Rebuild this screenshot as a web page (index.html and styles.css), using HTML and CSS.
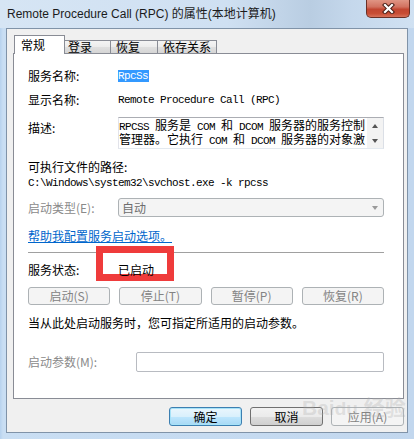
FILE: index.html
```html
<!DOCTYPE html>
<html>
<head>
<meta charset="utf-8">
<link rel="stylesheet" href="styles.css">
</head>
<body>
<div class="window">
  <div class="titlebar">
    <span class="title">Remote Procedure Call (RPC) 的属性(本地计算机)</span>
    <div class="close">
      <svg width="13" height="11" viewBox="0 0 13 11">
        <path d="M3 2 L10 9 M10 2 L3 9" stroke="#4a1e16" stroke-width="4.2" stroke-linecap="square" fill="none"/>
        <path d="M3 2 L10 9 M10 2 L3 9" stroke="#ffffff" stroke-width="2.2" stroke-linecap="square" fill="none"/>
      </svg>
    </div>
  </div>
  <div class="client">
    <div class="tabs">
      <div class="tab active">常规</div>
      <div class="tab t2">登录</div>
      <div class="tab t3">恢复</div>
      <div class="tab t4">依存关系</div>
    </div>
    <div class="panel">
      <div class="row r1"><span class="label">服务名称:</span><span class="mono sel">RpcSs</span></div>
      <div class="row r2"><span class="label">显示名称:</span><span class="mono">Remote Procedure Call (RPC)</span></div>
      <div class="row r3">
        <span class="label lab-top">描述:</span>
        <div class="textarea">
          <div class="ta-text"><div class="ta-line"><span class="mono">RPCSS </span>服务是<span class="mono"> COM </span>和<span class="mono"> DCOM </span>服务器的服务控制</div><div class="ta-line">管理器。它执行<span class="mono"> COM </span>和<span class="mono"> DCOM </span>服务器的对象激</div></div>
          <div class="scroll"><div class="arr"><span class="up"></span></div><div class="arr"><span class="down"></span></div></div>
        </div>
      </div>
      <div class="row r4"><span>可执行文件的路径:</span></div>
      <div class="row r5"><span class="mono">C:\Windows\system32\svchost.exe -k rpcss</span></div>
      <div class="row r6">
        <span class="label dis">启动类型(E):</span>
        <div class="select"><span>自动</span><span class="down sel-arr"></span></div>
      </div>
      <div class="row r7"><span class="link">帮助我配置服务启动选项。</span></div>
      <div class="sep"></div>
      <div class="row r8"><span class="label">服务状态:</span><span class="status">已启动</span></div>
      <div class="btns">
        <div class="dbtn">启动(S)</div>
        <div class="dbtn">停止(T)</div>
        <div class="dbtn">暂停(P)</div>
        <div class="dbtn">恢复(R)</div>
      </div>
      <div class="row r9"><span>当从此处启动服务时，您可指定所适用的启动参数。</span></div>
      <div class="row r10"><span class="label wide dis">启动参数(M):</span><div class="input"></div></div>
      <div class="redbox"></div>
    </div>
    <div class="actions">
      <div class="btn default">确定</div>
      <div class="btn">取消</div>
      <div class="btn disabled">应用(A)</div>
    </div>
  </div>
  <div class="wm">Bai<span class="wm2">du</span> 经验</div>
</div>
</body>
</html>
```
FILE: styles.css
```css
html, body {
  margin: 0;
  padding: 0;
}
body {
  width: 414px;
  height: 439px;
  overflow: hidden;
  background: #c4d9ef;
  font-family: "Noto Sans CJK SC", "Liberation Sans", sans-serif;
  font-size: 12px;
  color: #000;
}
.window {
  position: relative;
  height: 439px;
  box-sizing: border-box;
  padding: 0 6px 6px 6px;
  background: linear-gradient(to right, #b7d2ee 0, #c9def3 3px, #c6dbf1 50%, #c2d7ee 100%);
}
.titlebar {
  display: flex;
  align-items: flex-start;
  height: 28px;
  margin: 0 -6px;
  padding: 0 4px 0 7px;
  background: linear-gradient(to right, #d6e5f4 0%, #cfe0f2 55%, #b9cde2 75%, #c5d8ec 85%, #d0e1f2 100%);
}
.title {
  font-family: "Liberation Sans", "Noto Sans CJK SC", sans-serif;
  font-size: 12px;
  line-height: 28px;
  color: #1b1b1b;
}
.close {
  margin-left: auto;
  width: 44px;
  height: 18px;
  box-sizing: border-box;
  border: 1px solid #6a3026;
  border-top: none;
  border-radius: 0 0 5px 5px;
  background: linear-gradient(#e09584 0%, #d27260 40%, #c24631 55%, #c84e35 80%, #d8725a 100%);
  display: flex;
  align-items: center;
  justify-content: center;
}
.client {
  height: 405px;
  box-sizing: border-box;
  border: 1px solid #8093a8;
  background: #f0f0f0;
  padding: 6px 3px 0 6px;
}
.tabs {
  display: flex;
  align-items: flex-end;
  height: 18px;
  margin-left: 1px;
  position: relative;
  z-index: 2;
}
.tab {
  box-sizing: border-box;
  height: 13px;
  border: 1px solid #898c95;
  border-bottom: none;
  margin-left: -1px;
  background: linear-gradient(#f4f4f4 0%, #ececec 50%, #e0e0e0 51%, #d5d5d5 100%);
  line-height: 12px;
  padding-left: 5px;
  white-space: nowrap;
}
.tab.active {
  width: 51px;
  height: 19px;
  margin-left: 0;
  margin-bottom: -1px;
  background: #fff;
  padding-left: 6px;
  line-height: 17px;
  position: relative;
  z-index: 3;
}
.t2 { width: 47px; padding-left: 3px; }
.t3 { width: 48px; }
.t4 { width: 60px; }
.panel {
  position: relative;
  height: 346px;
  box-sizing: border-box;
  border: 1px solid #898c95;
  background: #fff;
  padding: 14px 19px 0 14px;
}
.row {
  display: flex;
  align-items: center;
  line-height: 16px;
  white-space: nowrap;
}
.label {
  width: 90px;
  flex: none;
}
.label.wide { width: 108px; }
.dis { color: #8a8a8a; }
.mono {
  font-family: "Liberation Mono", monospace;
  font-size: 11px;
  letter-spacing: -0.6px;
}
.sel {
  background: #3399ff;
  color: #fff;
  line-height: 12px;
  padding-right: 1px;
}
.r1 { height: 16px; }
.r2 { margin-top: 8px; }
.r3 { margin-top: 9px; align-items: flex-start; }
.lab-top { padding-top: 3px; }
.textarea {
  width: 266px;
  height: 32px;
  box-sizing: border-box;
  border: 1px solid;
  border-color: #abadb3 #dbdfe6 #e3e9ef #e2e3ea;
  display: flex;
  background: #fff;
}
.ta-text {
  flex: 1;
  white-space: nowrap;
  padding-top: 0;
}
.ta-line {
  height: 14px;
  line-height: 14px;
}
.scroll {
  width: 16px;
  flex: none;
  background: #f3f3f3;
  display: flex;
  flex-direction: column;
}
.arr {
  height: 15px;
  display: flex;
  align-items: center;
  justify-content: center;
}
.up, .down {
  width: 0;
  height: 0;
  border-left: 3.5px solid transparent;
  border-right: 3.5px solid transparent;
}
.up { border-bottom: 4px solid #555; }
.down { border-top: 4px solid #555; }
.r4 { margin-top: 10px; }
.r6 { margin-top: 7px; }
.select {
  width: 266px;
  height: 19px;
  box-sizing: border-box;
  border: 1px solid #adb2b5;
  border-radius: 3px;
  background: #f4f4f4;
  color: #6d6d6d;
  display: flex;
  align-items: center;
  padding-left: 3px;
}
.sel-arr {
  margin-left: auto;
  margin-right: 5px;
  border-top-color: #9a9a9a;
}
.r7 { margin-top: 11px; }
.link {
  color: #0066cc;
  text-decoration: underline;
}
.sep {
  margin-top: 8px;
  height: 1px;
  background: #a0a0a0;
}
.r8 { margin-top: 9px; }
.status {
  position: relative;
  z-index: 2;
}
.btns {
  margin-top: 9px;
  display: grid;
  grid-template-columns: repeat(4, 1fr);
  gap: 9px;
}
.dbtn {
  height: 18px;
  box-sizing: border-box;
  border: 1px solid #adb2b5;
  border-radius: 3px;
  background: #f4f4f4;
  color: #838383;
  text-align: center;
  line-height: 16px;
}
.r9 { margin-top: 10px; }
.r10 { margin-top: 21px; }
.input {
  width: 248px;
  height: 20px;
  box-sizing: border-box;
  border: 1px solid #b8bbc1;
  border-radius: 2px;
  background: #fff;
}
.redbox {
  position: absolute;
  left: 82px;
  top: 192px;
  width: 78px;
  height: 35px;
  box-sizing: border-box;
  border: 7px solid #ef3b3b;
  background: #fff;
  z-index: 1;
}
.actions {
  display: flex;
  justify-content: flex-end;
  gap: 8px;
  margin-top: 8px;
}
.btn {
  width: 73px;
  height: 19px;
  box-sizing: border-box;
  border: 1px solid #707070;
  border-radius: 3px;
  background: linear-gradient(#f2f2f2 0%, #ebebeb 50%, #dddddd 51%, #cfcfcf 100%);
  text-align: center;
  line-height: 17px;
}
.btn.default {
  border-color: #3c7fb1;
  background: linear-gradient(#eaf6fd 0%, #d9f0fc 50%, #bee6fd 51%, #a7d9f5 100%);
  box-shadow: inset 0 0 0 1px #a6e2f8;
}
.btn.disabled {
  border-color: #adb2b5;
  background: #f4f4f4;
  color: #838383;
}
.wm {
  position: absolute;
  left: 302px;
  top: 391px;
  font-family: "Liberation Sans", "Noto Sans CJK SC", sans-serif;
  font-size: 21px;
  font-weight: bold;
  color: rgba(170, 170, 170, 0.3);
  white-space: nowrap;
}
.wm2 { font-size: 19px; }
```
